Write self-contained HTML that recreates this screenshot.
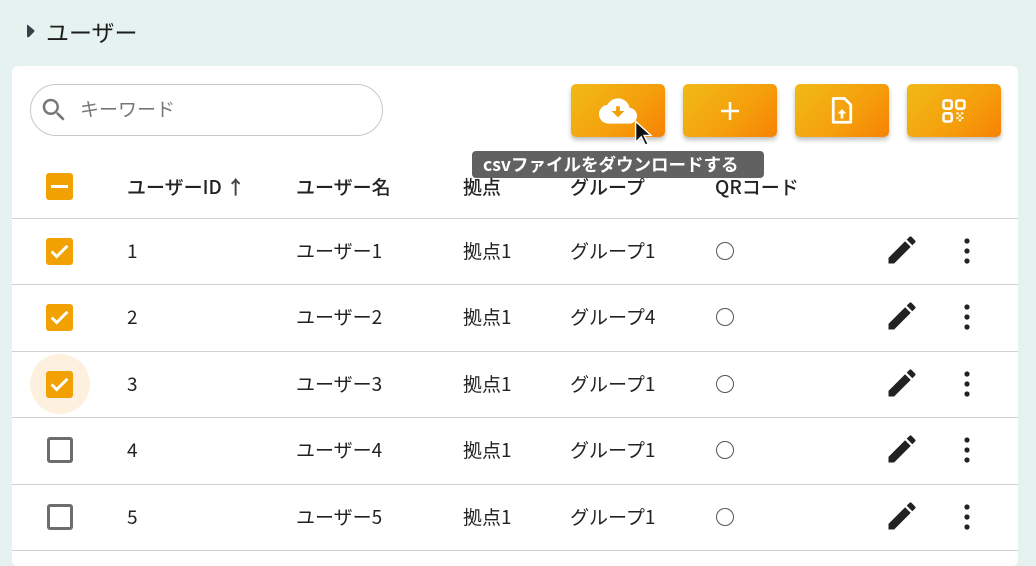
<!DOCTYPE html>
<html><head><meta charset="utf-8"><style>
*{margin:0;padding:0;box-sizing:border-box}
body{width:1036px;height:556px;background:#e5f2ef;font-family:"Noto Sans CJK JP","Liberation Sans",sans-serif;color:#222;position:relative;overflow:hidden}
.abs{position:absolute}
.title{left:26px;top:15px;font-size:23px;line-height:32px;display:flex;align-items:center;gap:10px;color:#1d1d1d}
.card{left:12px;top:66px;width:1006px;height:500px;background:#fff;border-radius:6px}
.search{left:30px;top:84px;width:353px;height:52px;border:1px solid #c8c8cc;border-radius:26px}
.search span{position:absolute;left:49px;top:0;line-height:48px;font-size:19px;color:#777}
.btn{top:84px;width:94px;height:53px;border-radius:5px;background:linear-gradient(135deg,#efbb17,#f59e0b 60%,#f78205);box-shadow:0 3px 5px rgba(0,0,0,.25);display:flex;align-items:center;justify-content:center}
.tip{left:472px;top:151px;width:292px;height:27px;background:#616161;color:#fff;border-radius:4px;font-size:17.5px;font-weight:bold;line-height:27px;padding-left:11px;z-index:5;white-space:nowrap}
.line{left:12px;width:1006px;height:1px;background:#d0d0d8}
.t{font-size:19px;position:absolute;line-height:26px;height:26px;white-space:nowrap}
.h{font-weight:500}
.cb{position:absolute;left:46px;width:27px;height:27px;border-radius:3px}
.on{background:#f2a103}
.off{border:3px solid #6d6d6d;width:26px;height:26px;left:47px}
.circ{position:absolute;left:716px;width:18px;height:18px;border:1.3px solid #555;border-radius:50%}
</style></head><body>
<div class="abs title"><svg width="10" height="14"><path d="M2 1 Q1 0 1 2 V12 Q1 14 3 13 L8 8 Q9 7 8 6 Z" fill="#3a3f48"/></svg><span>ユーザー</span></div>
<div class="abs card"></div>
<div class="abs search"><svg class="abs" style="left:8px;top:10px" width="30" height="30" viewBox="0 0 24 24"><path fill="#777" d="M15.5 14h-.8l-.3-.3A6.5 6.5 0 1 0 9.5 16a6.5 6.5 0 0 0 4.2-1.6l.3.3v.8l5 5 1.5-1.5-5-5zm-6 0a4.5 4.5 0 1 1 0-9 4.5 4.5 0 0 1 0 9z"/></svg><span>キーワード</span></div>
<div class="abs btn" style="left:571px"><svg width="38" height="38" viewBox="0 0 24 24"><path fill="#fff" d="M19.35 10.04A7.49 7.49 0 0 0 12 4C9.11 4 6.6 5.64 5.35 8.04A5.994 5.994 0 0 0 0 14c0 3.31 2.69 6 6 6h13c2.76 0 5-2.24 5-5 0-2.64-2.05-4.78-4.65-4.96z"/><path fill="#f2a103" d="M10.8 9h2.4v3h2.8l-4 4-4-4h2.8z"/></svg></div>
<div class="abs btn" style="left:683px"><svg width="24" height="24" viewBox="0 0 24 24"><path d="M12 3v18M3 12h18" stroke="#fff" stroke-width="2.5"/></svg></div>
<div class="abs btn" style="left:795px"><svg width="26" height="30" viewBox="0 0 20 24"><path d="M3 2h9l5 5v14H3z" fill="none" stroke="#fff" stroke-width="2.2" stroke-linejoin="round"/><path d="M10 18v-5" stroke="#fff" stroke-width="2.2"/><path d="M6.5 14l3.5-3.5 3.5 3.5z" fill="#fff"/></svg></div>
<div class="abs btn" style="left:907px"><svg width="28" height="28" viewBox="0 0 24 24" fill="none" stroke="#fff" stroke-width="2.2"><rect x="3" y="3" width="7" height="7" rx="1.5"/><rect x="14" y="3" width="7" height="7" rx="1.5"/><rect x="3" y="14" width="7" height="7" rx="1.5"/><path d="M14 14h2M18 14h2M16 16h2M14 18h2M18 18h2M16 20h2" stroke-width="1.6"/></svg></div>
<svg class="abs" style="left:634px;top:120px;z-index:6" width="20" height="28" viewBox="0 0 14 20"><path d="M1 1v15l4-4 3 6 2-1-3-6h5z" fill="#111" stroke="#fff" stroke-width="1"/></svg>
<div class="abs tip">csvファイルをダウンロードする</div>

<div class="cb on" style="top:173px"><div style="position:absolute;left:5px;top:12px;width:17px;height:3px;background:#fff"></div></div>
<div class="t h" style="left:127px;top:174px">ユーザーID <span style="color:#444;font-weight:bold">↑</span></div>
<div class="t h" style="left:296px;top:174px">ユーザー名</div>
<div class="t h" style="left:463px;top:174px">拠点</div>
<div class="t h" style="left:570px;top:174px">グループ</div>
<div class="t h" style="left:715px;top:174px">QRコード</div>
<div class="abs line" style="top:218px"></div>

<div id="rows"></div>
<script>
var data=[["1","1","1",1],["2","2","4",1],["3","3","1",1],["4","4","1",0],["5","5","1",0]];
var h="";
data.forEach(function(d,i){
 var y=218+i*66.4, c=Math.round(y+33);
 if(i==2)h+='<div class="abs" style="left:30px;top:'+(c-30)+'px;width:60px;height:60px;border-radius:50%;background:#fdf0df"></div>';
 h+= d[3]?'<div class="cb on" style="top:'+(c-13)+'px"><svg width="27" height="27" viewBox="0 0 24 24"><path d="M5 12l4.5 4.5L19 7" stroke="#fff" stroke-width="2.6" fill="none"/></svg></div>':'<div class="cb off" style="top:'+(c-13)+'px"></div>';
 h+='<div class="t" style="left:127px;top:'+(c-13)+'px">'+d[0]+'</div>';
 h+='<div class="t" style="left:296px;top:'+(c-13)+'px">ユーザー'+d[1]+'</div>';
 h+='<div class="t" style="left:463px;top:'+(c-13)+'px">拠点1</div>';
 h+='<div class="t" style="left:570px;top:'+(c-13)+'px">グループ'+d[2]+'</div>';
 h+='<div class="circ" style="top:'+(c-9)+'px"></div>';
 h+='<svg class="abs" style="left:884px;top:'+(c-19)+'px" width="36" height="36" viewBox="0 0 24 24"><path fill="#222" d="M3 17.25V21h3.75L17.81 9.94l-3.75-3.75L3 17.25zM20.71 7.04a1 1 0 0 0 0-1.41l-2.34-2.34a1 1 0 0 0-1.41 0l-1.83 1.83 3.75 3.75 1.83-1.83z"/></svg>';
 h+='<svg class="abs" style="left:955px;top:'+(c-16)+'px" width="24" height="32" viewBox="0 0 24 32"><circle cx="12" cy="6" r="2.6" fill="#222"/><circle cx="12" cy="16" r="2.6" fill="#222"/><circle cx="12" cy="26" r="2.6" fill="#222"/></svg>';
 h+='<div class="abs line" style="top:'+Math.round(y+66.4)+'px"></div>';
});
document.getElementById("rows").innerHTML=h;
</script>
</body></html>
